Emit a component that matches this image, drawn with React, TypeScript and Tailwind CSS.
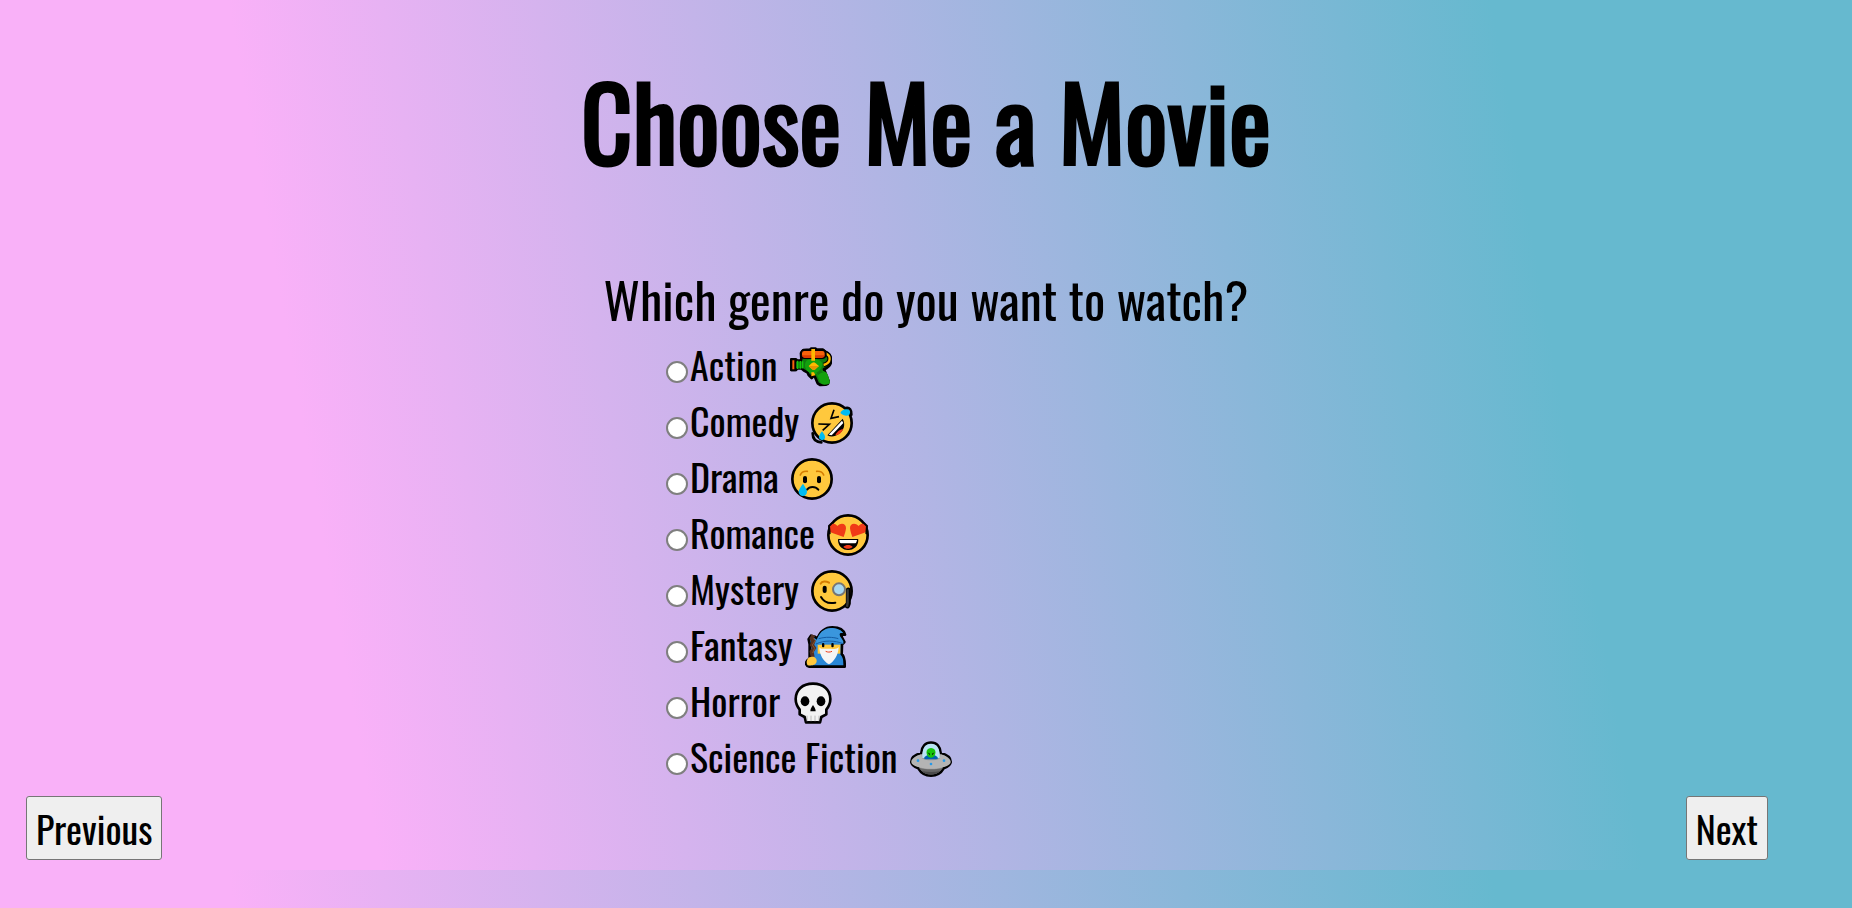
import type { ReactNode } from "react";

type Genre = {
  id: string;
  label: string;
  icon: ReactNode;
};

const outline = {
  stroke: "#000",
  strokeWidth: 8,
  strokeLinejoin: "round",
  strokeLinecap: "round",
} as const;

function WaterGun() {
  return (
    <>
      <path
        d="M4 40h14l4 4h10l2-6-1-16 7-10 20-1 3-3h14l3 3h19l8 7 6 3c12 10 14 28 4 39l-8 7-7 3 14 36-2 7-7 3-16 1-8-5-8-19-5-7h-4l3 6-4 4-9-9-3-7-12-7-7-6H22l-4 5H4z"
        fill="#107c10"
        {...outline}
      />
      <path d="M4 40h12v33H4z" fill="#f7630c" {...outline} strokeWidth={6} />
      <path d="M18 47h24v20H18z" fill="#107c10" />
      <path d="M23 44v25M31 45v23M38 46v21" stroke="#16c60c" strokeWidth="4" />
      <path d="M106 22c18 6 18 29-5 35" fill="none" stroke="#000" strokeWidth="14" />
      <path d="M106 22c18 6 18 29-5 35" fill="none" stroke="#ffb900" strokeWidth="7" />
      <rect x="33" y="12" width="74" height="24" rx="10" fill="#f7630c" {...outline} strokeWidth={6} />
      <path d="M35 28h70c-2 6-5 8-9 8H44c-5 0-7-4-9-8z" fill="#da3b01" />
      <path
        d="M49 44c13-9 45-6 48 9 1 9-2 15-6 20 14 3 19 6 23 15l6 20c0 6-6 8-17 8-10 0-12-6-15-13l-8-19c-13 2-25-4-31-13-5-8-6-19 0-27z"
        fill="#13a10e"
      />
      <path d="M93 47c9 10 0 25-14 33l5 8c6-5 12-9 18-9l-10-5 8-15z" fill="#107c10" />
      <path d="M64 9h11v35H64zM64 79h8l4 9-12 3z" fill="#ffb900" />
      <path d="M56 60c5-3 8-10 16-11 6 3 10 7 15 11-5 4-9 9-15 12-8-1-11-8-16-12z" fill="#ffb900" />
      <path d="M56 60h31c-5 4-9 9-15 12-8-1-11-8-16-12z" fill="#e69500" />
    </>
  );
}

function Laughing() {
  return (
    <>
      <circle cx="63" cy="63" r="59" fill="#ffc83d" {...outline} />
      <path d="M104 18c12-3 18 6 17 20M5 94c0 18 9 26 26 27" fill="none" {...outline} />
      <path d="M69 23 60 49l24-5M22 66l33 1-20 18" fill="none" stroke="#000" strokeWidth="5" />
      <path d="M95 50c10 18 3 36-12 46-10 8-23 10-34 4z" fill="#000" />
      <path d="m93 56 4 7-35 37-9-2z" fill="#fff" />
      <path d="M97 82c-5 10-13 17-24 18 4-10 13-18 24-18z" fill="#f03a17" />
      <path d="M88 33c4-10 13-13 21-11 10 3 10 11 5 17-7 4-17 2-26-6z" fill="#00bcf2" />
      <path d="M33 88c8 10 12 19 7 24-6 5-15 2-16-6 0-6 4-12 9-18z" fill="#00bcf2" />
    </>
  );
}

function Crying() {
  return (
    <>
      <circle cx="63" cy="63" r="59" fill="#ffc83d" {...outline} />
      <path
        d="M28 51c3-8 10-12 21-11M98 51c-3-8-10-12-21-11"
        fill="none"
        stroke="#d67d00"
        strokeWidth="5"
        strokeLinecap="round"
      />
      <rect x="36" y="54" width="12" height="22" rx="6" />
      <rect x="78" y="54" width="12" height="22" rx="6" />
      <path d="M48 95c8-11 25-11 34 0" fill="none" {...outline} strokeWidth={6} />
      <path d="M36 77c8 12 12 19 12 24 0 8-6 13-12 13s-13-5-13-13c0-6 6-15 13-24z" fill="#00bcf2" />
    </>
  );
}

function HeartEyes() {
  return (
    <>
      <circle cx="63" cy="63" r="59" fill="#ffc83d" {...outline} />
      <path
        d="M50 69 14 56C0 49 7 28 19 29c6 0 10 3 12 7 13-13 27-5 26 7-1 9-4 18-7 26z"
        fill="#f03a17"
      />
      <path
        d="m76 69 36-13c14-7 7-28-5-27-6 0-10 3-12 7-13-13-27-5-26 7 1 9 4 18 7 26z"
        fill="#f03a17"
      />
      <path d="M8 58 6 36l8-8M118 58l2-22-8-8" fill="none" {...outline} strokeWidth={6} />
      <path d="M35 77h57c0 39-57 39-57 0z" {...outline} strokeWidth={4} />
      <path d="M37 78h53c-1 5-3 9-5 10H42c-3-1-5-5-5-10z" fill="#fff" />
      <path d="M49 99c8-8 21-8 28 0-8 7-21 7-28 0z" fill="#f03a17" />
    </>
  );
}

function Monocle() {
  return (
    <>
      <circle cx="63" cy="63" r="59" fill="#ffc83d" {...outline} />
      <path
        d="M29 41c4-8 16-8 25-3"
        fill="none"
        stroke="#d67d00"
        strokeWidth="6"
        strokeLinecap="round"
      />
      <rect x="35" y="47" width="12" height="22" rx="6" />
      <path d="M30 81c9 16 24 21 43 17" fill="none" {...outline} strokeWidth={6} />
      <path d="M112 60v40l-3 8" fill="none" {...outline} strokeWidth={15} />
      <path d="M110 58v41l-2 11" fill="none" stroke="#383838" strokeWidth="7" />
      <circle cx="84" cy="58" r="18" fill="#a9d8f0" stroke="#767676" strokeWidth="6" />
    </>
  );
}

function Wizard() {
  return (
    <>
      <path
        d="M14 98V55l-3-15 7-11 11 3 9 6C43 18 61 4 82 4c18 0 34 7 38 22l-12-1 2 8 8 15-7 8-1 28c7 6 10 13 9 38H13C1 119-1 106 14 98z"
        fill="#2987d6"
        {...outline}
      />
      <path d="M38 56h68v27H38z" fill="#ffc83d" />
      <path
        d="M34 45C41 21 56 7 77 6c19 0 32 6 37 15-14-1-15 3-5 15l6 10v9c-25-7-55-7-78 1z"
        fill="#3a96dd"
      />
      <path
        d="M33 54c24-12 57-11 81-1M41 38c21-6 42-5 59 0"
        fill="none"
        stroke="#145ca4"
        strokeWidth="3"
      />
      <rect x="51" y="51" width="7" height="13" rx="3" />
      <rect x="79" y="51" width="7" height="13" rx="3" />
      <path
        d="M43 63c4 8 12 5 20 5h15c9 1 18 2 23-5-1 25-14 44-29 52C56 107 43 87 43 63z"
        fill="#f5f5f5"
      />
      <path d="M62 76c6 3 13 3 19 0" fill="none" stroke="#f03a17" strokeWidth="3" />
      <path d="M25 27 20 38l5 8-4 11 6 9-7 11 3 16" fill="none" stroke="#56301f" strokeWidth="12" />
      <path d="m25 37 6 7-9 13 7 10-6 14" fill="none" stroke="#8e562e" strokeWidth="3" />
      <path d="M13 94c12-5 23 1 22 12-1 10-12 14-27 12-6-8-2-20 5-24z" fill="#ffc83d" />
    </>
  );
}

function Skull() {
  return (
    <>
      <path
        d="M63 5C31 5 11 24 11 51c0 15 5 23 12 32v14l15 8 4 16h42l4-16 15-8V83c7-9 12-17 12-32C115 24 95 5 63 5z"
        fill="#f2f2f2"
        {...outline}
      />
      <ellipse cx="39" cy="58" rx="13" ry="15" />
      <ellipse cx="87" cy="58" rx="13" ry="15" />
      <path d="M63 69c5 7 8 13 8 19H55c0-6 3-12 8-19z" />
      <path d="M45 101v17M57 101v17M69 101v17M81 101v17" stroke="#a0a0a0" strokeWidth="2" />
    </>
  );
}

function Saucer() {
  return (
    <>
      <path
        d="M34 45c1-19 12-31 29-31s28 12 29 31c19 5 30 15 30 26 0 10-8 15-21 20-8 14-21 22-38 22s-30-8-38-22C12 86 4 81 4 71c0-11 11-21 30-26z"
        fill="#9b9b9b"
        {...outline}
      />
      <path d="M37 60c-2-28 8-43 26-43s28 15 26 43z" fill="#b9e4f5" />
      <path d="M43 58c8-10 32-10 40 0v6H43z" fill="#0063b1" />
      <path d="M63 30c20 0 16 29 0 29s-20-29 0-29z" fill="#16c60c" />
      <path d="m52 43 8 4v5zM74 43l-8 4v5z" />
      <path
        d="M34 49c-34 10-42 29-10 38 24 7 54 7 78 0 32-9 24-28-10-38l-3 13c-15 6-38 6-52 0z"
        fill="#b4b4b4"
      />
      <path d="M27 89c23 6 49 6 72 0-8 13-21 20-36 20s-29-7-36-20z" fill="#686868" />
      <path d="M35 99c18 4 39 4 56 0-15 15-42 15-56 0z" fill="#4b4b4b" />
      <circle cx="24" cy="68" r="4" fill="#2699e8" />
      <circle cx="63" cy="78" r="4" fill="#2699e8" />
      <circle cx="102" cy="68" r="4" fill="#2699e8" />
    </>
  );
}

const genres: Genre[] = [
  { id: "action", label: "Action", icon: <WaterGun /> },
  { id: "comedy", label: "Comedy", icon: <Laughing /> },
  { id: "drama", label: "Drama", icon: <Crying /> },
  { id: "romance", label: "Romance", icon: <HeartEyes /> },
  { id: "mystery", label: "Mystery", icon: <Monocle /> },
  { id: "fantasy", label: "Fantasy", icon: <Wizard /> },
  { id: "horror", label: "Horror", icon: <Skull /> },
  { id: "scifi", label: "Science Fiction", icon: <Saucer /> },
];

function GenreOption({ genre }: { genre: Genre }) {
  return (
    <li className="flex h-14 items-center">
      <input
        type="radio"
        name="genre"
        id={genre.id}
        value={genre.id}
        className="mt-4 mr-0.5 size-[22px] appearance-none rounded-full border-2 border-[#7f7f7f] bg-white checked:border-[6px] checked:border-[#0075ff]"
      />
      <label htmlFor={genre.id} className="flex items-center gap-3 whitespace-nowrap">
        {genre.label}
        <svg viewBox="0 0 126 126" className="mt-1.5 size-[42px]" aria-hidden="true">
          {genre.icon}
        </svg>
      </label>
    </li>
  );
}

export default function App() {
  return (
    <div className="min-h-screen bg-[linear-gradient(80deg,#f9b1f8_19%,#66b9cf_82%)] bg-[length:100%_870px] pt-12 font-['Oswald','Liberation_Sans_Narrow','Liberation_Sans',sans-serif] text-[38px] text-black">
      <h1 className="text-center text-[100px] leading-[144px] font-normal [-webkit-text-stroke:3px_#000]">
        Choose Me a Movie
      </h1>
      <form>
        <fieldset aria-labelledby="question" className="pt-17">
          <h2 id="question" className="text-center text-[50px] leading-[76px]">
            Which genre do you want to watch?
          </h2>
          <ul className="mx-auto max-w-[520px]">
            {genres.map((genre) => (
              <GenreOption key={genre.id} genre={genre} />
            ))}
          </ul>
        </fieldset>
        <div className="flex justify-between pt-3 pr-21 pl-6.5">
          <button
            type="button"
            className="h-16 rounded-[3px] border border-[#767676] bg-[#efefef] px-[9px]"
          >
            Previous
          </button>
          <button
            type="button"
            className="h-16 rounded-[3px] border border-[#767676] bg-[#efefef] px-[9px]"
          >
            Next
          </button>
        </div>
      </form>
    </div>
  );
}
